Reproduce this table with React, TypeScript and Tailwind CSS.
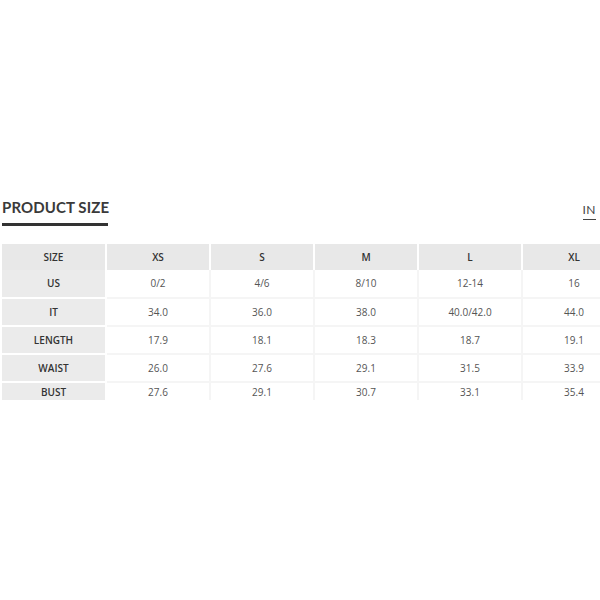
const columns = ["XS", "S", "M", "L", "XL"];

const rows: { label: string; values: string[] }[] = [
  { label: "US", values: ["0/2", "4/6", "8/10", "12-14", "16"] },
  { label: "IT", values: ["34.0", "36.0", "38.0", "40.0/42.0", "44.0"] },
  { label: "LENGTH", values: ["17.9", "18.1", "18.3", "18.7", "19.1"] },
  { label: "WAIST", values: ["26.0", "27.6", "29.1", "31.5", "33.9"] },
  { label: "BUST", values: ["27.6", "29.1", "30.7", "33.1", "35.4"] },
];

const App = () => {
  return (
    <div className="w-[600px] h-[600px] bg-white overflow-hidden font-['Open_Sans',sans-serif]">
      <div className="pt-[198px] pl-[2px] pr-[4px] flex justify-between items-start">
        <div className="flex flex-col">
          <p className="font-['Lato',sans-serif] font-bold text-[15px] leading-[18px] text-[#3a3a3a] tracking-[0.1px]">
            PRODUCT SIZE
          </p>
          <div className="mt-[7px] h-[3px] w-[106px] bg-[#333333]" />
        </div>
        <div className="flex flex-col items-center mt-[6px]">
          <p className="font-['Lato',sans-serif] text-[12px] leading-[12px] text-[#444444] tracking-[0.5px]">
            IN
          </p>
          <div className="mt-[3px] h-[1px] w-[13px] bg-[#444444]" />
        </div>
      </div>
      <div className="mt-[18px] ml-[2px] h-[157px] overflow-hidden">
        <table className="w-[624px] border-collapse table-fixed text-center">
          <thead>
            <tr className="h-[26px]">
              <th className="w-[104px] bg-[#e8e8e8] border-r-2 border-white text-[10px] font-semibold text-[#333333]">
                SIZE
              </th>
              {columns.map((col, key) => (
                <th
                  key={key}
                  className="w-[104px] bg-[#e8e8e8] border-r-2 border-white text-[10px] font-semibold text-[#333333]"
                >
                  {col}
                </th>
              ))}
            </tr>
          </thead>
          <tbody>
            {rows.map((row, key) => (
              <tr
                className={key === rows.length - 1 ? "h-[18px]" : "h-[28px]"}
                key={key}
              >
                <td
                  className={
                    key === rows.length - 1
                      ? "bg-[#ebebeb] border-r-2 border-white text-[10px] font-semibold text-[#333333] align-top pt-[3px] leading-[13px]"
                      : "bg-[#ebebeb] border-r-2 border-b-2 border-white text-[10px] font-semibold text-[#333333]"
                  }
                >
                  {row.label}
                </td>
                {row.values.map((v, i) => (
                  <td
                    key={i}
                    className={
                      key === rows.length - 1
                        ? "border-r-2 border-[#f5f5f5] text-[10px] text-[#555555] align-top pt-[3px] leading-[13px]"
                        : "border-r-2 border-b-2 border-[#f5f5f5] text-[10px] text-[#555555]"
                    }
                  >
                    {v}
                  </td>
                ))}
              </tr>
            ))}
          </tbody>
        </table>
      </div>
    </div>
  );
};

export default App;
